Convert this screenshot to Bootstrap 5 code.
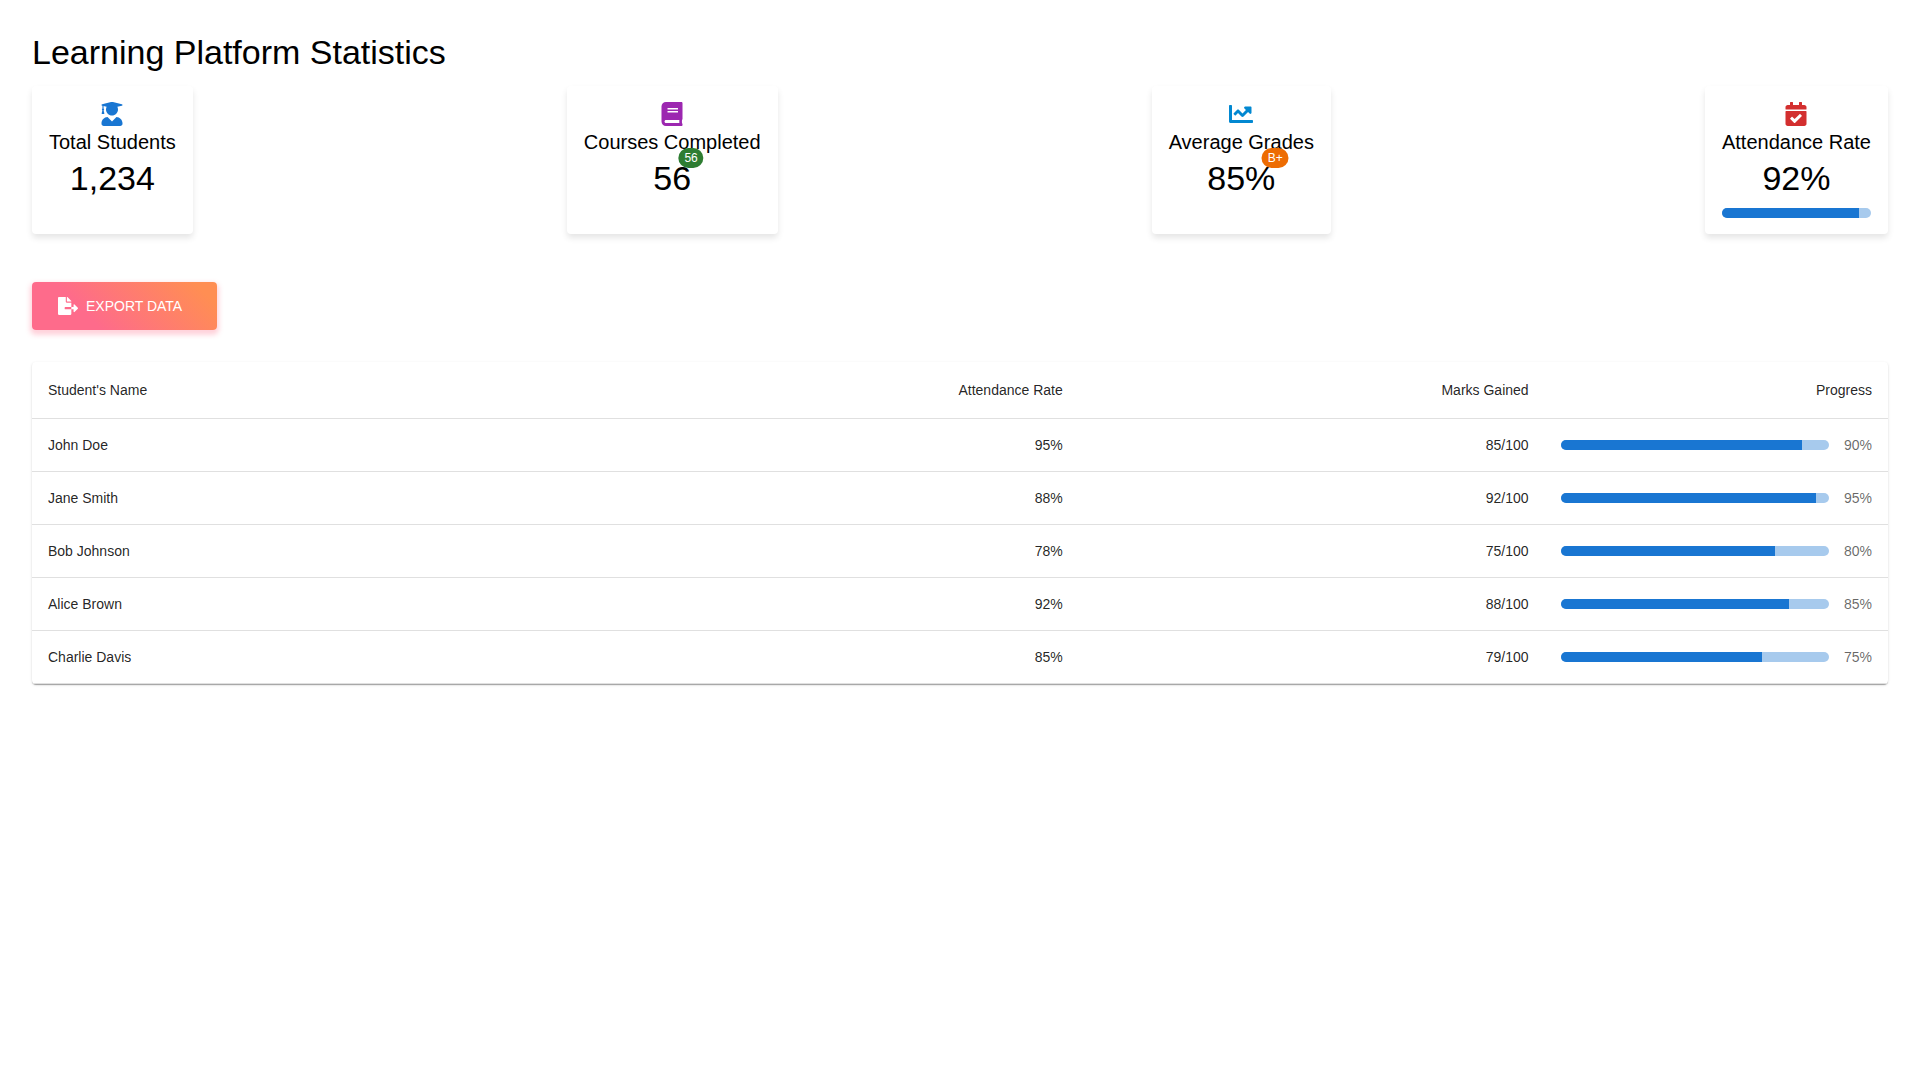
<!DOCTYPE html>
<html lang="en">
<head>
<meta charset="utf-8">
<meta name="viewport" content="width=device-width, initial-scale=1">
<title>Learning Platform Statistics</title>
<link href="https://cdn.jsdelivr.net/npm/bootstrap@5.3.0/dist/css/bootstrap.min.css" rel="stylesheet">
<style>
  body { font-family: "Liberation Sans", Arial, sans-serif; color: #000; background: #fff; }
  .page { padding: 32px; }
  .page-title { font-size: 34px; line-height: 40px; font-weight: 400; margin: 0 0 14px; color: #000; }
  .stats { margin-bottom: 48px; }
  .stat { padding: 16px 17px; border-radius: 4px; background: #fff; text-align: center; box-shadow: 0 4px 6px rgba(0, 0, 0, .1); }
  .stat-icon { display: block; width: 24px; height: 24px; margin: 0 auto; fill: currentColor; }
  .stat-label { font-size: 20px; line-height: 32px; font-weight: 400; margin: 0; }
  .stat-value { font-size: 34px; line-height: 40px; padding-bottom: 2px; }
  .tone-blue { color: #1976d2; }
  .tone-purple { color: #9c27b0; }
  .tone-sky { color: #0288d1; }
  .tone-red { color: #d32f2f; }
  .stat-badge { font-size: 12px; line-height: 20px; font-weight: 400; padding: 0 6px; border-radius: 10px; color: #fff; }
  .stat-badge-green { background: #2e7d32; }
  .stat-badge-orange { background: #ed6c02; }
  .progress { --bs-progress-height: 10px; --bs-progress-bg: #a7caed; --bs-progress-bar-bg: #1976d2; --bs-progress-border-radius: 5px; }
  .btn-export, .btn-export:hover { color: #fff; }
  .btn-export { height: 48px; min-width: 185px; padding: 0 26px; border: 0; border-radius: 4px; font-size: 14px; line-height: 24px;
    background: linear-gradient(45deg, #fe6b8b 30%, #ff8e53 90%); box-shadow: 0 3px 5px 2px rgba(255, 105, 135, .3); }
  .btn-export svg { width: 20px; height: 18px; fill: currentColor; }
  .sheet { margin-top: 32px; border-radius: 4px; background: #fff;
    box-shadow: 0 2px 1px -1px rgba(0, 0, 0, .2), 0 1px 1px rgba(0, 0, 0, .14), 0 1px 3px rgba(0, 0, 0, .12); }
  .grades { --bs-table-bg: transparent; --bs-table-color: rgba(0, 0, 0, .87); color: rgba(0, 0, 0, .87); font-size: 14px; line-height: 20px; border-collapse: separate; border-spacing: 0; table-layout: fixed; }
  .grades > :not(caption) > * > * { padding: 16px; border: 0; border-bottom: 1px solid #e0e0e0; font-weight: 400; text-align: right; color: rgba(0, 0, 0, .87); box-shadow: none; }
  .grades > thead > tr > th { line-height: 24px; }
  .grades > * > tr > :first-child { text-align: left; }
  .col-name { width: 30%; }
  .col-attendance { width: 26.4%; }
  .col-marks { width: 25.1%; }
  .percent { min-width: 35px; color: rgba(0, 0, 0, .6); }
</style>
</head>
<body>
<main class="page">
  <h1 class="page-title">Learning Platform Statistics</h1>

  <section class="stats d-flex flex-wrap justify-content-between">
    <div class="stat">
      <svg class="stat-icon tone-blue" viewBox="0 0 448 512" aria-hidden="true"><path d="M319.4 320.6L224 416l-95.4-95.4C57.1 323.7 0 382.2 0 454.4v9.6c0 26.5 21.5 48 48 48h352c26.5 0 48-21.5 48-48v-9.6c0-72.2-57.1-130.7-128.6-133.8zM13.6 79.8l6.4 1.5v58.4c-7 4.2-12 11.5-12 20.3 0 8.4 4.6 15.4 11.1 19.7L3.5 242c-1.7 6.9 2.1 14 7.6 14h41.8c5.5 0 9.3-7.1 7.6-14l-15.6-62.3C51.4 175.4 56 168.4 56 160c0-8.8-5-16.1-12-20.3V87.1l66 15.9c-8.6 17.2-14 36.4-14 57 0 70.7 57.3 128 128 128s128-57.3 128-128c0-20.6-5.3-39.8-14-57l96.3-23.2c18.2-4.4 18.2-27.1 0-31.5l-190.4-46c-13-3.1-26.7-3.1-39.7 0L13.6 48.2c-18.1 4.4-18.1 27.2 0 31.6z"/></svg>
      <h2 class="stat-label">Total Students</h2>
      <div class="stat-value">1,234</div>
    </div>
    <div class="stat">
      <svg class="stat-icon tone-purple" viewBox="0 0 448 512" aria-hidden="true"><path d="M448 360V24c0-13.3-10.7-24-24-24H96C43 0 0 43 0 96v320c0 53 43 96 96 96h328c13.3 0 24-10.7 24-24v-16c0-7.5-3.5-14.3-8.9-18.7-4.2-15.4-4.2-59.3 0-74.7 5.4-4.3 8.9-11.1 8.9-18.6zM128 134c0-3.3 2.7-6 6-6h212c3.3 0 6 2.7 6 6v20c0 3.3-2.7 6-6 6H134c-3.3 0-6-2.7-6-6v-20zm0 64c0-3.3 2.7-6 6-6h212c3.3 0 6 2.7 6 6v20c0 3.3-2.7 6-6 6H134c-3.3 0-6-2.7-6-6v-20zm253.4 250H96c-17.7 0-32-14.3-32-32 0-17.6 14.4-32 32-32h285.4c-1.9 17.1-1.9 46.9 0 64z"/></svg>
      <h2 class="stat-label">Courses Completed</h2>
      <div class="stat-value"><span class="d-inline-block position-relative">56<span class="stat-badge stat-badge-green position-absolute top-0 start-100 translate-middle">56</span></span></div>
    </div>
    <div class="stat">
      <svg class="stat-icon tone-sky" viewBox="0 0 512 512" aria-hidden="true"><path d="M496 384H64V80c0-8.84-7.16-16-16-16H16C7.16 64 0 71.16 0 80v336c0 17.67 14.33 32 32 32h464c8.84 0 16-7.16 16-16v-32c0-8.84-7.16-16-16-16zM464 96H345.94c-21.38 0-32.09 25.85-16.97 40.97l32.4 32.4L288 242.75l-73.37-73.37c-12.5-12.5-32.76-12.5-45.25 0l-68.69 68.69c-6.25 6.25-6.25 16.38 0 22.63l22.62 22.62c6.25 6.25 16.38 6.25 22.63 0L192 237.25l73.37 73.37c12.5 12.5 32.76 12.5 45.25 0l96-96 32.4 32.4c15.12 15.12 40.97 4.41 40.97-16.97V112c.01-8.84-7.15-16-15.99-16z"/></svg>
      <h2 class="stat-label">Average Grades</h2>
      <div class="stat-value"><span class="d-inline-block position-relative">85%<span class="stat-badge stat-badge-orange position-absolute top-0 start-100 translate-middle">B+</span></span></div>
    </div>
    <div class="stat">
      <svg class="stat-icon tone-red" viewBox="0 0 448 512" aria-hidden="true"><path d="M436 160H12c-6.627 0-12-5.373-12-12v-36c0-26.51 21.49-48 48-48h48V12c0-6.627 5.373-12 12-12h40c6.627 0 12 5.373 12 12v52h128V12c0-6.627 5.373-12 12-12h40c6.627 0 12 5.373 12 12v52h48c26.51 0 48 21.49 48 48v36c0 6.627-5.373 12-12 12zM12 192h424c6.627 0 12 5.373 12 12v260c0 26.51-21.49 48-48 48H48c-26.51 0-48-21.49-48-48V204c0-6.627 5.373-12 12-12zm333.296 95.947l-28.169-28.398c-4.667-4.705-12.265-4.736-16.97-.068L194.12 364.665l-45.98-46.352c-4.667-4.705-12.266-4.736-16.971-.068l-28.397 28.17c-4.705 4.667-4.736 12.265-.068 16.97l82.601 83.269c4.667 4.705 12.265 4.736 16.97.068l142.953-141.805c4.705-4.667 4.736-12.265.068-16.97z"/></svg>
      <h2 class="stat-label">Attendance Rate</h2>
      <div class="stat-value">92%</div>
      <div class="progress mt-2" role="progressbar" aria-label="Attendance rate" aria-valuenow="92" aria-valuemin="0" aria-valuemax="100"><div class="progress-bar" style="width: 92%"></div></div>
    </div>
  </section>

  <button type="button" class="btn btn-export d-inline-flex align-items-center gap-2">
    <svg viewBox="0 0 576 512" aria-hidden="true"><path d="M384 121.9c0-6.3-2.5-12.4-7-16.9L279.1 7c-4.5-4.5-10.6-7-17-7H256v128h128zM571 308l-95.7-96.4c-10.1-10.1-27.4-3-27.4 11.3V288h-64v64h64v65.2c0 14.3 17.3 21.4 27.4 11.3L571 332c6.6-6.6 6.6-17.4 0-24zm-379 28v-32c0-8.8 7.2-16 16-16h176V160H248c-13.2 0-24-10.8-24-24V0H24C10.7 0 0 10.7 0 24v464c0 13.3 10.7 24 24 24h336c13.3 0 24-10.7 24-24V352H208c-8.8 0-16-7.2-16-16z"/></svg>
    <span class="text-uppercase">Export Data</span>
  </button>

  <div class="sheet">
    <table class="table grades mb-0">
      <thead>
        <tr>
          <th scope="col" class="col-name">Student's Name</th>
          <th scope="col" class="col-attendance">Attendance Rate</th>
          <th scope="col" class="col-marks">Marks Gained</th>
          <th scope="col">Progress</th>
        </tr>
      </thead>
      <tbody>
        <tr>
          <th scope="row">John Doe</th><td>95%</td><td>85/100</td>
          <td><div class="d-flex align-items-center gap-2"><div class="progress flex-grow-1" role="progressbar" aria-label="John Doe" aria-valuenow="90" aria-valuemin="0" aria-valuemax="100"><div class="progress-bar" style="width: 90%"></div></div><span class="percent">90%</span></div></td>
        </tr>
        <tr>
          <th scope="row">Jane Smith</th><td>88%</td><td>92/100</td>
          <td><div class="d-flex align-items-center gap-2"><div class="progress flex-grow-1" role="progressbar" aria-label="Jane Smith" aria-valuenow="95" aria-valuemin="0" aria-valuemax="100"><div class="progress-bar" style="width: 95%"></div></div><span class="percent">95%</span></div></td>
        </tr>
        <tr>
          <th scope="row">Bob Johnson</th><td>78%</td><td>75/100</td>
          <td><div class="d-flex align-items-center gap-2"><div class="progress flex-grow-1" role="progressbar" aria-label="Bob Johnson" aria-valuenow="80" aria-valuemin="0" aria-valuemax="100"><div class="progress-bar" style="width: 80%"></div></div><span class="percent">80%</span></div></td>
        </tr>
        <tr>
          <th scope="row">Alice Brown</th><td>92%</td><td>88/100</td>
          <td><div class="d-flex align-items-center gap-2"><div class="progress flex-grow-1" role="progressbar" aria-label="Alice Brown" aria-valuenow="85" aria-valuemin="0" aria-valuemax="100"><div class="progress-bar" style="width: 85%"></div></div><span class="percent">85%</span></div></td>
        </tr>
        <tr>
          <th scope="row">Charlie Davis</th><td>85%</td><td>79/100</td>
          <td><div class="d-flex align-items-center gap-2"><div class="progress flex-grow-1" role="progressbar" aria-label="Charlie Davis" aria-valuenow="75" aria-valuemin="0" aria-valuemax="100"><div class="progress-bar" style="width: 75%"></div></div><span class="percent">75%</span></div></td>
        </tr>
      </tbody>
    </table>
  </div>
</main>
<script src="https://cdn.jsdelivr.net/npm/bootstrap@5.3.0/dist/js/bootstrap.bundle.min.js"></script>
</body>
</html>
